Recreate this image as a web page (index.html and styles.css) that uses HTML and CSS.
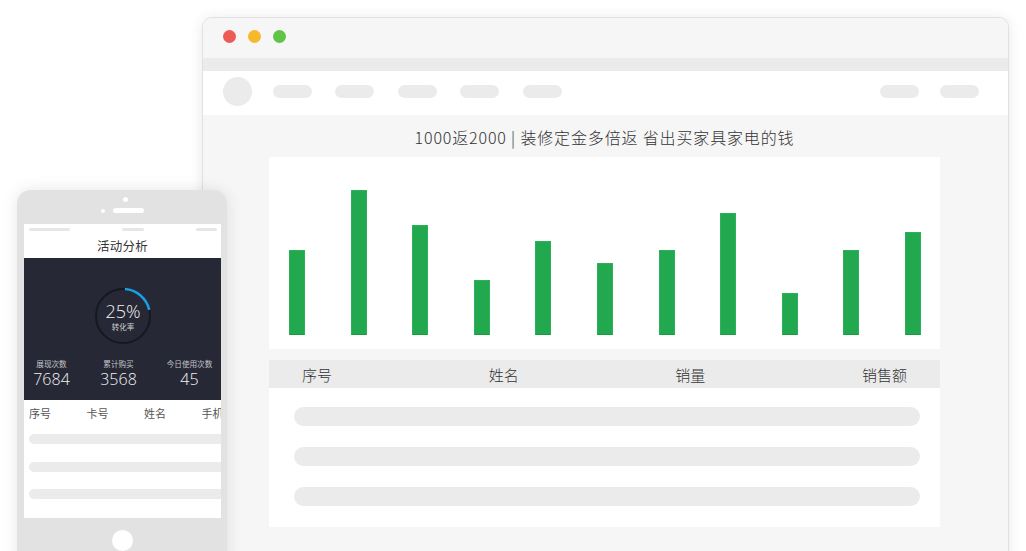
FILE: index.html
```html
<!DOCTYPE html>
<html lang="zh">
<head>
<meta charset="utf-8">
<title>Activity dashboard</title>
<link rel="stylesheet" href="styles.css">
</head>
<body>
<div class="stage">
  <div class="browser">
    <div class="titlebar">
      <span class="light red"></span>
      <span class="light yellow"></span>
      <span class="light green"></span>
    </div>
    <div class="tabstrip"></div>
    <div class="navbar">
      <span class="avatar"></span>
      <div class="nav-left">
        <span class="pill"></span><span class="pill"></span><span class="pill"></span><span class="pill"></span><span class="pill"></span>
      </div>
      <div class="nav-right">
        <span class="pill"></span><span class="pill"></span>
      </div>
    </div>
    <div class="content">
      <div class="page-title">1000返2000 | 装修定金多倍返 省出买家具家电的钱</div>
      <div class="chart">
        <span class="bar" style="height:85px"></span>
        <span class="bar" style="height:145px"></span>
        <span class="bar" style="height:110px"></span>
        <span class="bar" style="height:55px"></span>
        <span class="bar" style="height:94px"></span>
        <span class="bar" style="height:72px"></span>
        <span class="bar" style="height:85px"></span>
        <span class="bar" style="height:122px"></span>
        <span class="bar" style="height:42px"></span>
        <span class="bar" style="height:85px"></span>
        <span class="bar" style="height:103px"></span>
      </div>
      <div class="table">
        <div class="thead">
          <span>序号</span><span>姓名</span><span>销量</span><span>销售额</span>
        </div>
        <div class="tbody">
          <span class="row-pill"></span>
          <span class="row-pill"></span>
          <span class="row-pill"></span>
        </div>
      </div>
    </div>
  </div>

  <div class="phone">
    <div class="phone-top">
      <span class="camera"></span>
      <div class="speaker-row"><span class="sensor"></span><span class="speaker"></span></div>
    </div>
    <div class="screen">
      <div class="status">
        <span class="st st-l"></span><span class="st st-c"></span><span class="st st-r"></span>
      </div>
      <div class="app-title">活动分析</div>
      <div class="panel">
        <div class="ring">
          <svg width="58" height="58" viewBox="0 0 58 58">
            <circle cx="29" cy="29" r="27" fill="none" stroke="#17181f" stroke-width="2"/>
            <circle cx="29" cy="29" r="27" fill="none" stroke="#1a9fe4" stroke-width="2.5" stroke-dasharray="34 200" stroke-dashoffset="-2" transform="rotate(-90 29 29)"/>
          </svg>
          <div class="ring-text">
            <span class="ring-num">25%</span>
            <span class="ring-label">转化率</span>
          </div>
        </div>
        <div class="stats">
          <div class="stat"><span class="stat-label">展现次数</span><span class="stat-val">7684</span></div>
          <div class="stat"><span class="stat-label">累计购买</span><span class="stat-val">3568</span></div>
          <div class="stat"><span class="stat-label">今日使用次数</span><span class="stat-val">45</span></div>
        </div>
      </div>
      <div class="m-head">
        <span>序号</span><span>卡号</span><span>姓名</span><span class="m-last">手机</span>
      </div>
      <div class="m-rows">
        <span class="m-pill"></span>
        <span class="m-pill"></span>
        <span class="m-pill"></span>
      </div>
    </div>
    <span class="home"></span>
  </div>
</div>
</body>
</html>
```

FILE: styles.css
```css
* { box-sizing: border-box; margin: 0; padding: 0; }
html, body { background: #fff; }
body {
  font-family: "Noto Sans CJK SC", "Noto Sans", sans-serif;
  color: #333;
}
.stage {
  position: relative;
  width: 1026px;
  height: 551px;
  overflow: hidden;
  background: #fff;
}

/* ---------- browser window ---------- */
.browser {
  position: absolute;
  left: 202px;
  top: 17px;
  width: 807px;
  height: 600px;
  border: 1px solid #e1e1e1;
  border-radius: 10px;
  background: #f6f6f6;
  box-shadow: 0 1px 14px rgba(0, 0, 0, 0.09);
  overflow: hidden;
  display: flex;
  flex-direction: column;
}
.titlebar {
  height: 40px;
  flex: none;
  background: #f6f6f6;
  display: flex;
  align-items: center;
  gap: 12px;
  padding: 0 0 3px 20px;
}
.light { width: 13px; height: 13px; border-radius: 50%; }
.red { background: #ee5b55; }
.yellow { background: #f6b92c; }
.green { background: #5ec547; }
.tabstrip { height: 13px; flex: none; background: #ebebeb; }
.navbar {
  height: 44px;
  flex: none;
  background: #fff;
  display: flex;
  align-items: center;
  padding: 0 29px 3px 20px;
}
.avatar { width: 29px; height: 29px; border-radius: 50%; background: #ebebeb; margin-right: 21px; }
.nav-left { display: flex; gap: 23.4px; }
.nav-right { display: flex; gap: 21px; margin-left: auto; }
.pill { width: 39px; height: 13px; border-radius: 7px; background: #ebebeb; display: block; }

.content {
  flex: 1;
  padding: 0 68px 0 66px;
  display: flex;
  flex-direction: column;
}
.page-title {
  height: 42px;
  padding-top: 2px;
  display: flex;
  align-items: center;
  justify-content: center;
  font-size: 16px;
  font-weight: 300;
  color: #333;
  letter-spacing: 0.85px;
  white-space: pre;
}
.chart {
  height: 192px;
  background: #fff;
  display: flex;
  align-items: flex-end;
  justify-content: space-between;
  padding: 0 19px 14px 20px;
}
.bar {
  width: 16px;
  background: #22a84f;
  border: 1px solid #2bb159;
  border-bottom-color: #1a9a45;
}
.table { margin-top: 11px; }
.thead {
  height: 28px;
  background: #ebebeb;
  display: flex;
  justify-content: space-between;
  align-items: center;
  padding: 1px 33px 0 33px;
  font-size: 15px;
  font-weight: 300;
  color: #333;
}
.tbody {
  background: #fff;
  display: flex;
  flex-direction: column;
  gap: 21px;
  padding: 19px 20px 21px 25px;
}
.row-pill { height: 19px; border-radius: 10px; background: #ebebeb; display: block; }

/* ---------- phone ---------- */
.phone {
  position: absolute;
  left: 17px;
  top: 190px;
  width: 210px;
  height: 400px;
  background: #e2e2e2;
  border-radius: 14px;
  box-shadow: 0 0 16px rgba(0, 0, 0, 0.10);
  display: flex;
  flex-direction: column;
  align-items: center;
  z-index: 2;
}
.phone-top {
  height: 34px;
  flex: none;
  display: flex;
  flex-direction: column;
  align-items: center;
  padding-top: 7px;
  gap: 6px;
}
.camera { width: 5px; height: 5px; border-radius: 50%; background: #fff; margin-left: 7px; }
.speaker-row { display: flex; align-items: center; gap: 8px; }
.sensor { width: 4px; height: 4px; border-radius: 50%; background: #fff; }
.speaker { width: 31px; height: 5px; border-radius: 3px; background: #fff; }

.screen {
  width: 197px;
  height: 294px;
  flex: none;
  margin-left: 1px;
  background: #fff;
  overflow: hidden;
  display: flex;
  flex-direction: column;
}
.status {
  height: 8px;
  display: flex;
  justify-content: space-between;
  padding: 4px 4px 0 5px;
}
.st { height: 3px; background: #e6e6e6; border-radius: 2px; display: block; }
.st-l { width: 41px; }
.st-c { width: 22px; }
.st-r { width: 21px; }
.app-title {
  height: 26px;
  display: flex;
  align-items: center;
  justify-content: center;
  font-size: 12.5px;
  color: #333;
  letter-spacing: 0.3px;
}
.panel {
  height: 142px;
  background: #262836;
  display: flex;
  flex-direction: column;
  align-items: center;
  padding-top: 29px;
}
.ring {
  position: relative;
  width: 58px;
  height: 58px;
  margin-left: 1px;
}
.ring svg { display: block; }
.ring-text {
  position: absolute;
  inset: 0;
  display: flex;
  flex-direction: column;
  align-items: center;
  justify-content: center;
  gap: 1px;
}
.ring-num {
  font-family: "Open Sans", "Noto Sans", sans-serif;
  font-weight: 300;
  font-size: 18px;
  line-height: 20px;
  color: #f2f2f2;
}
.ring-label { font-size: 7.5px; line-height: 9px; color: #d0d0d0; }
.stats {
  align-self: stretch;
  display: grid;
  grid-template-columns: 55px 79px 63px;
  margin-top: 14px;
}
.stat { display: flex; flex-direction: column; align-items: center; }
.stat-label { font-size: 7.6px; line-height: 10px; color: #c4c4c8; }
.stat-val {
  font-family: "Open Sans", "Noto Sans", sans-serif;
  font-weight: 300;
  font-size: 16px;
  line-height: 20px;
  color: #f2f2f2;
}
.m-head {
  height: 26px;
  flex: none;
  display: grid;
  grid-template-columns: 57.5px 57.5px 57.5px 20px;
  align-items: center;
  padding-left: 5px;
  font-size: 11px;
  color: #555;
  white-space: nowrap;
}
.m-last { overflow: hidden; }
.m-rows {
  display: flex;
  flex-direction: column;
  gap: 17.5px;
  padding: 8px 0 0 5px;
}
.m-pill { width: 210px; height: 10px; border-radius: 5px; background: #ebebeb; display: block; }
.home {
  width: 21px;
  height: 21px;
  border-radius: 50%;
  background: #fff;
  margin-top: 12px;
  display: block;
}
```
